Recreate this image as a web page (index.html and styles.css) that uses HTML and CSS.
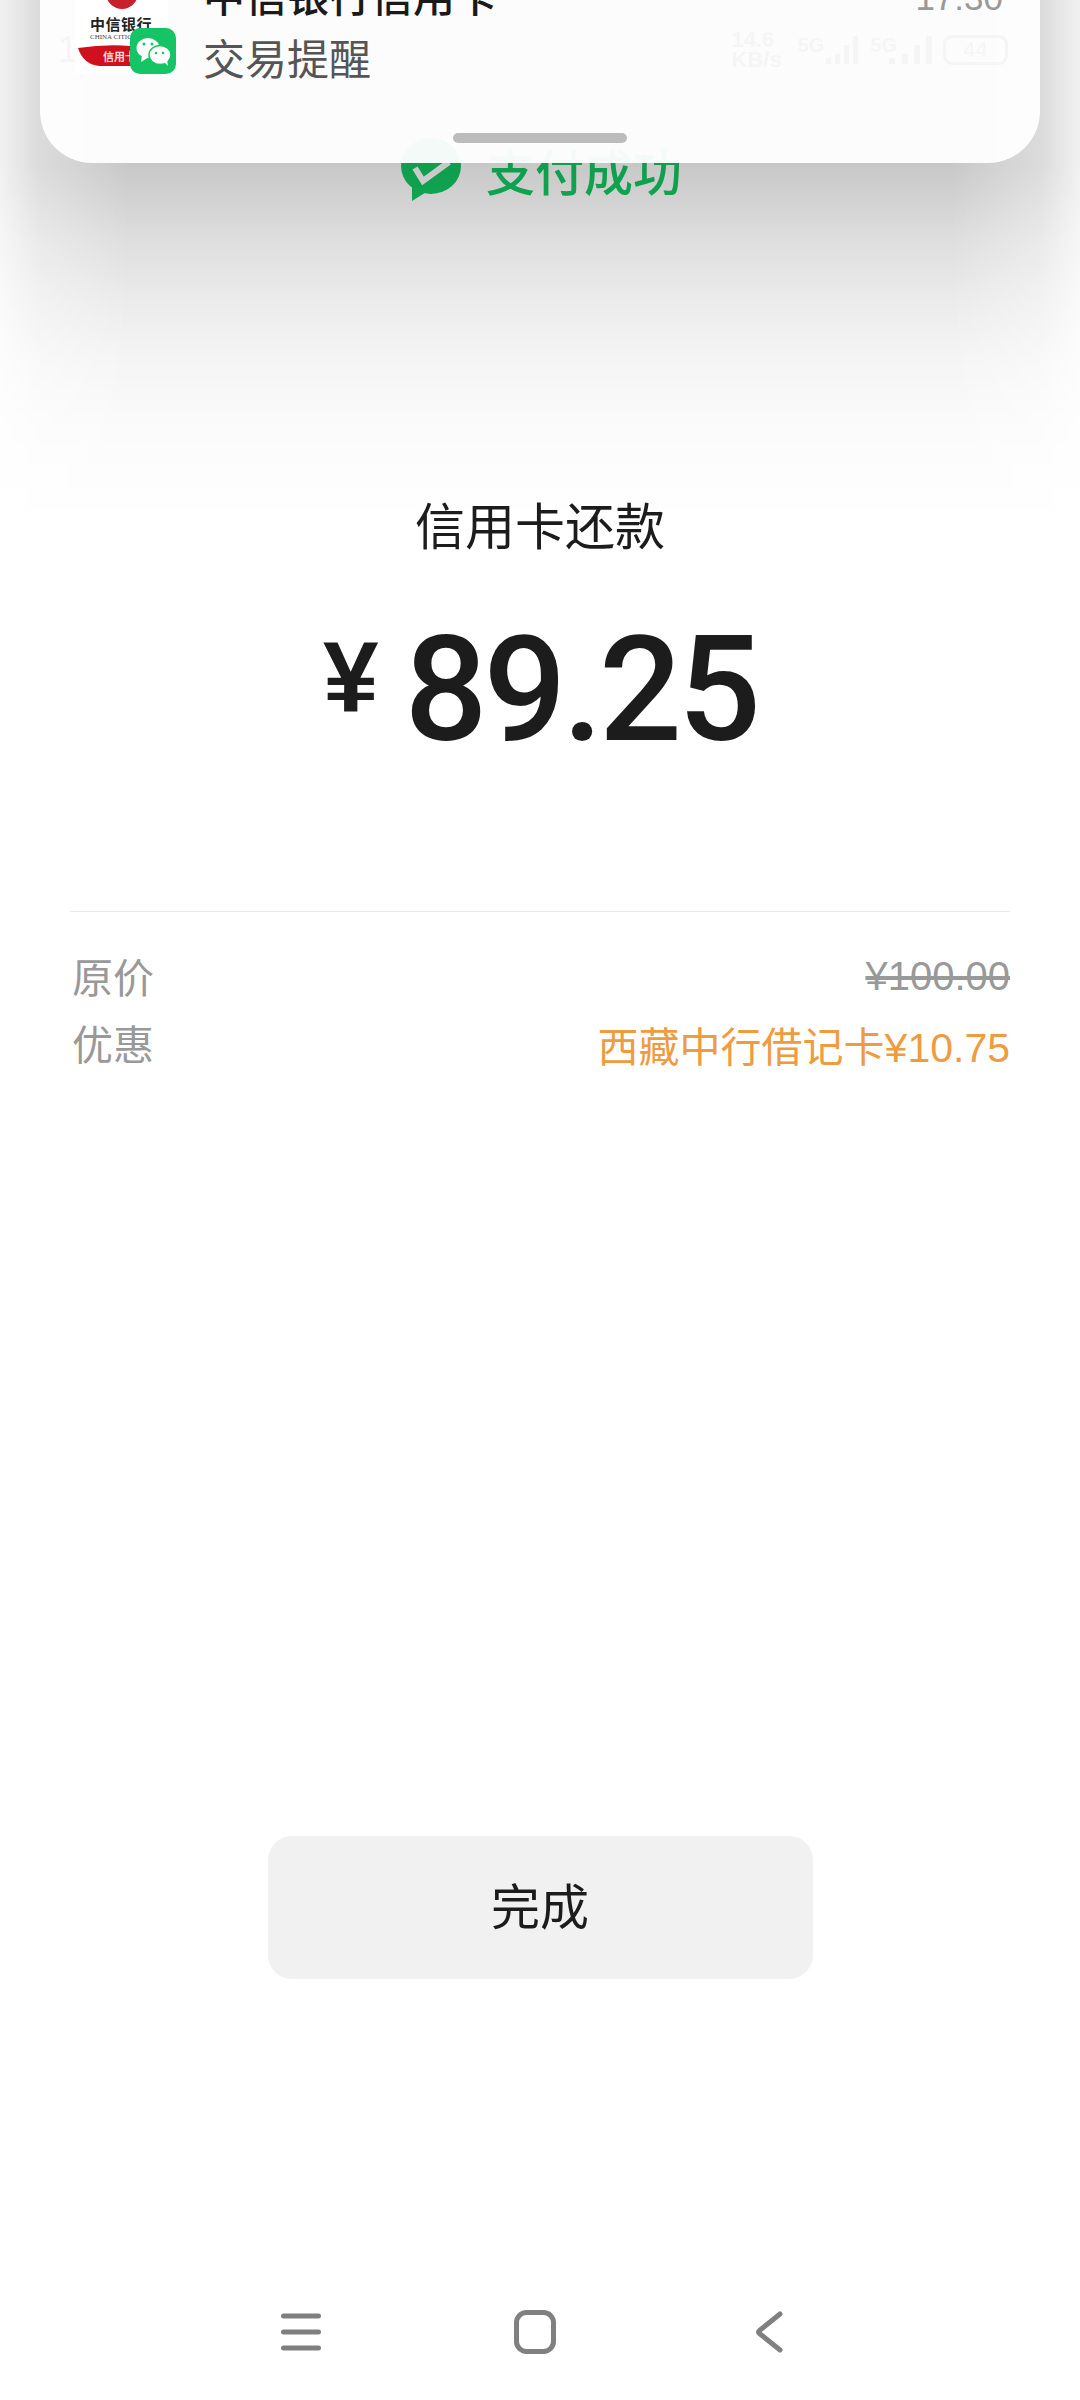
FILE: index.html
```html
<!DOCTYPE html>
<html lang="zh-CN">
<head>
    <meta charset="UTF-8">
    <meta name="viewport" content="width=device-width, initial-scale=1.0">
    <title>支付成功</title>
    <link rel="stylesheet" href="styles.css">
</head>
<body>

    <div class="page">

        <!-- 状态栏 (被通知卡片盖住) -->
        <div class="status-bar">
            <span class="status-time">17:30</span>
            <div class="status-right">
                <span class="net-speed">14.6<br>KB/s</span>
                <div class="signal">
                    <span class="signal-label">5G</span>
                    <svg width="38" height="32" viewBox="0 0 38 32"><path d="M2 30h5v-6H2zM11 30h5V20h-5zM20 30h5V11h-5zM29 30h5V2h-5z" fill="#222"/></svg>
                </div>
                <div class="signal signal-tight">
                    <span class="signal-label">5G</span>
                    <svg width="50" height="32" viewBox="0 0 50 32"><path d="M4 30h6v-6H4zM17 30h6V20h-6zM29 30h6V11h-6zM41 30h6V2h-6z" fill="#222"/></svg>
                </div>
                <span class="battery">44</span>
            </div>
        </div>

        <div class="success">
            <svg class="success-icon" width="62" height="66" viewBox="0 0 62 66">
                <ellipse cx="31" cy="29" rx="30" ry="28" fill="#15c862"/>
                <path d="M12 50L12 64L28 54z" fill="#15c862"/>
                <path d="M15 31L23 44L49 25" fill="none" stroke="#fff" stroke-width="6"/>
            </svg>
            <span class="success-text">支付成功</span>
        </div>

        <div class="pay-title">信用卡还款</div>

        <div class="amount">
            <span class="amount-currency">¥</span>
            <span class="amount-value">89.25</span>
        </div>

        <div class="detail">
            <div class="detail-row">
                <span class="detail-label">原价</span>
                <span class="detail-price">¥100.00</span>
            </div>
            <div class="detail-row">
                <span class="detail-label">优惠</span>
                <span class="detail-discount">西藏中行借记卡¥10.75</span>
            </div>
        </div>

        <button class="done-btn">完成</button>

        <!-- 底部导航 -->
        <div class="nav-bar">
            <svg width="44" height="44" viewBox="0 0 44 44">
                <path d="M4.500 6h35M4.500 22h35M4.500 38h35" stroke="#808080" stroke-width="5" stroke-linecap="round" fill="none"/>
            </svg>
            <svg width="44" height="44" viewBox="0 0 44 44">
                <rect x="3.500" y="2.500" width="37" height="39" rx="10" stroke="#808080" stroke-width="5" fill="none"/>
            </svg>
            <svg width="44" height="44" viewBox="0 0 44 44">
                <path d="M33 4L12.500 20.500Q10.500 22 12.500 23.500L33 40" stroke="#808080" stroke-width="5" stroke-linecap="round" fill="none"/>
            </svg>
        </div>
    </div>

    <!-- 卡片投下的阴影 -->
    <div class="notice-shadow"></div>

    <!-- 下拉通知卡片 -->
    <div class="notice">
        <div class="notice-logo">
            <svg class="bank-logo" width="94" height="76" viewBox="0 0 94 76">
                <circle cx="47" cy="-7" r="16" fill="#c8202c"/>
                <path d="M3 48Q30 44 56 46V66H24Q8 64 3 48z" fill="#d0101c"/>
                <text x="15" y="30" class="bank-name">中信银行</text>
                <text x="15" y="39" class="bank-en">CHINA CITIC</text>
                <text x="28" y="61" class="bank-card">信用卡</text>
            </svg>
            <svg class="wechat-icon" width="46" height="46" viewBox="0 0 46 46">
                <rect width="46" height="46" rx="10" fill="#15c464"/>
                <ellipse cx="18" cy="20" rx="11.500" ry="10" fill="#fff"/>
                <path d="M12 27L11 34L19 29z" fill="#fff"/>
                <ellipse cx="30" cy="27" rx="11" ry="9.500" fill="#fff" stroke="#15c464" stroke-width="1.500"/>
                <path d="M34 34L38 38L37 31z" fill="#fff"/>
                <circle cx="14" cy="16" r="1.500" fill="#15c464"/>
                <circle cx="22" cy="16" r="1.500" fill="#15c464"/>
                <circle cx="26" cy="25" r="1.300" fill="#15c464"/>
                <circle cx="33" cy="25" r="1.300" fill="#15c464"/>
            </svg>
        </div>
        <div class="notice-body">
            <div class="notice-head">
                <span class="notice-title">中信银行信用卡</span>
                <span class="notice-time">17:30</span>
            </div>
            <div class="notice-text">交易提醒</div>
        </div>
        <div class="notice-handle"></div>
    </div>

</body>
</html>
```

FILE: styles.css
```css
* {
    box-sizing: border-box;
}

body {
    margin: 0;
    background: #fff;
    font-family: 'Liberation Sans', 'Noto Sans CJK SC', sans-serif;
    color: #1c1c1c;
}

.page {
    position: relative;
    width: 1080px;
    height: 2400px;
    overflow: hidden;
    display: flex;
    flex-direction: column;
    align-items: center;
}

/* 状态栏 */
.status-bar {
    width: 100%;
    height: 100px;
    flex-shrink: 0;
    padding: 30px 72px 0 58px;
    display: flex;
    justify-content: space-between;
    align-items: flex-start;
    color: #222;
}

.status-time {
    font-size: 36px;
    line-height: 40px;
}

.status-right {
    display: flex;
    align-items: center;
    gap: 8px;
}

.net-speed {
    margin-right: 8px;
    font-size: 22px;
    line-height: 20px;
    font-weight: bold;
}

.signal {
    display: flex;
    align-items: flex-start;
}

.signal-label {
    font-size: 20px;
    line-height: 22px;
    font-weight: bold;
}

.signal-tight svg {
    margin-left: -12px;
}

.battery {
    width: 65px;
    height: 30px;
    border: 3px solid #222;
    border-radius: 9px;
    font-size: 22px;
    line-height: 24px;
    text-align: center;
}

/* 支付成功 */
.success {
    margin-top: 37px;
    height: 66px;
    display: flex;
    align-items: flex-start;
    gap: 24px;
    padding-left: 2px;
}

.success-text {
    font-size: 49px;
    line-height: 66px;
    font-weight: 500;
    color: #15c862;
    margin-top: 4px;
}

.pay-title {
    margin-top: 295px;
    font-size: 50px;
    line-height: 60px;
}

.amount {
    margin-top: 63px;
    height: 140px;
    display: flex;
    align-items: flex-start;
    gap: 26px;
}

.amount-currency {
    font-size: 100px;
    line-height: 112px;
    font-weight: bold;
}

.amount-value {
    font-family: 'Roboto', sans-serif;
    font-size: 146px;
    line-height: 140px;
    font-weight: 500;
    letter-spacing: -4px;
}

/* 原价 / 优惠 */
.detail {
    width: 940px;
    margin-top: 150px;
    padding-top: 31px;
    border-top: 1px solid #e9e9e9;
}

.detail-row {
    height: 67px;
    display: flex;
    justify-content: space-between;
    align-items: center;
    font-size: 41px;
}

.detail-label {
    color: #999;
    margin-left: 2px;
    padding-bottom: 4px;
}

.detail-price {
    color: #999;
    font-size: 40px;
    text-decoration: line-through;
}

.detail-discount {
    color: #ef9b3f;
}

.done-btn {
    margin-top: 759px;
    width: 545px;
    height: 143px;
    padding-bottom: 9px;
    border: 0;
    border-radius: 24px;
    background: #f1f1f1;
    color: #1c1c1c;
    font-family: inherit;
    font-size: 49px;
}

.nav-bar {
    margin-top: auto;
    margin-bottom: 46px;
    display: flex;
    gap: 190px;
    padding-right: 10px;
}

/* 通知卡片 */
.notice-shadow {
    position: absolute;
    top: 0;
    left: 0;
    width: 1080px;
    height: 520px;
    background: linear-gradient(
        rgba(0, 0, 0, 0.216) 165px,
        rgba(0, 0, 0, 0.176) 200px,
        rgba(0, 0, 0, 0.13) 240px,
        rgba(0, 0, 0, 0.078) 300px,
        rgba(0, 0, 0, 0.04) 360px,
        rgba(0, 0, 0, 0.016) 430px,
        rgba(0, 0, 0, 0.004) 500px,
        rgba(0, 0, 0, 0) 520px
    );
    -webkit-mask-image: linear-gradient(90deg, rgba(0, 0, 0, 0.25), rgba(0, 0, 0, 0.65) 40px, #000 130px, #000 950px, rgba(0, 0, 0, 0.65) 1040px, rgba(0, 0, 0, 0.25));
    mask-image: linear-gradient(90deg, rgba(0, 0, 0, 0.25), rgba(0, 0, 0, 0.65) 40px, #000 130px, #000 950px, rgba(0, 0, 0, 0.65) 1040px, rgba(0, 0, 0, 0.25));
}

.notice {
    position: absolute;
    top: -60px;
    left: 40px;
    width: 1000px;
    height: 223px;
    padding: 0 37px 0 35px;
    display: flex;
    gap: 35px;
    background: rgba(254, 254, 254, 0.96);
    border-radius: 0 0 52px 52px;
}

.notice-logo {
    position: relative;
    width: 93px;
    height: 134px;
    flex-shrink: 0;
    background: #fff;
}

.bank-logo {
    position: absolute;
    left: 0;
    top: 60px;
}

.wechat-icon {
    position: absolute;
    left: 55px;
    top: 88px;
}

.bank-name {
    font-size: 15px;
    font-weight: bold;
    letter-spacing: 0.5px;
    fill: #222;
}

.bank-en {
    font-family: 'Liberation Serif', serif;
    font-size: 7px;
    fill: #444;
}

.bank-card {
    font-size: 11px;
    font-weight: bold;
    fill: #fbdcdc;
}

.notice-body {
    flex: 1;
    padding-top: 36px;
}

.notice-head {
    display: flex;
    justify-content: space-between;
    align-items: flex-end;
    height: 44px;
}

.notice-title {
    font-size: 42px;
    line-height: 44px;
    font-weight: 500;
    color: #1a1a1a;
}

.notice-time {
    font-size: 35px;
    line-height: 44px;
    color: #999;
}

.notice-text {
    margin-top: 16px;
    font-size: 42px;
    line-height: 50px;
    color: #555;
}

.notice-handle {
    position: absolute;
    left: 413px;
    bottom: 20px;
    width: 174px;
    height: 10px;
    border-radius: 5px;
    background: #bcbcbc;
}
```
